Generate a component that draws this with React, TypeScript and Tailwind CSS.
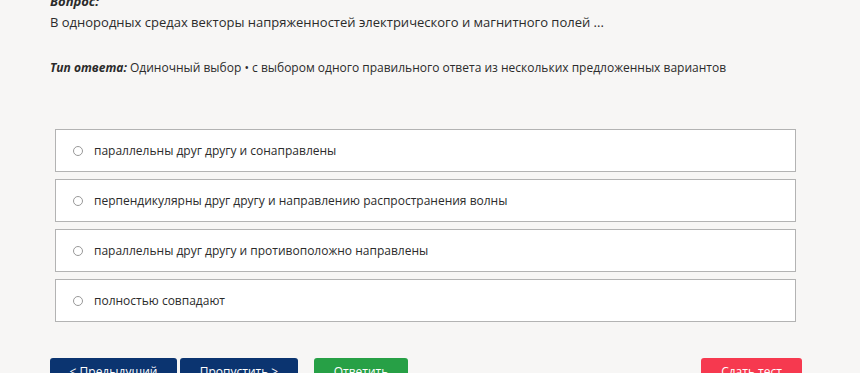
import React from "react";

const options = [
  "параллельны друг другу и сонаправлены",
  "перпендикулярны друг другу и направлению распространения волны",
  "параллельны друг другу и противоположно направлены",
  "полностью совпадают",
];

export default function App() {
  return (
    <div
      className="h-[373px] overflow-hidden bg-[#f7f6f5] text-[#2b2b2b]"
      style={{ fontFamily: '"Open Sans", "Noto Sans", sans-serif' }}
    >
      <div className="pl-[50px] w-[810px] -mt-[9px]">
        <div className="font-bold italic leading-[20px] text-[13px]">Вопрос:</div>
        <div className="leading-[20px] mt-[1px] text-[13px]">
          В однородных средах векторы напряженностей электрического и магнитного полей ...
        </div>

        <div className="mt-[26px] leading-[20px] text-[12px] whitespace-nowrap">
          <span className="font-bold italic">Тип ответа:</span> Одиночный выбор • с выбором одного
          правильного ответа из нескольких предложенных вариантов
        </div>

        <div className="mt-[51px] ml-[5px] w-[741px] flex flex-col gap-[7px]">
          {options.map((o) => (
            <label
              key={o}
              className="h-[43px] flex items-center bg-white border border-[#b3b3b3] pl-[17px]"
            >
              <span className="w-[10px] h-[10px] rounded-full border border-[#999] bg-white" />
              <span className="ml-[11px] text-[12px]">{o}</span>
            </label>
          ))}
        </div>

        <div className="mt-[36px] flex items-start">
          <button className="w-[127px] h-[34px] rounded-[3px] bg-[#0b3470] text-white text-[12px] pb-[6px]">
            &lt; Предыдущий
          </button>
          <button className="ml-[3px] w-[118px] h-[34px] rounded-[3px] bg-[#0b3470] text-white text-[12px] pb-[6px]">
            Пропустить &gt;
          </button>
          <button className="ml-[16px] w-[94px] h-[34px] rounded-[3px] bg-[#27a046] text-white text-[12px] pb-[6px]">
            Ответить
          </button>
          <button className="ml-auto mr-[8px] w-[101px] h-[34px] rounded-[3px] bg-[#f6394f] text-white text-[12px] pb-[6px]">
            Сдать тест
          </button>
        </div>
      </div>
    </div>
  );
}
